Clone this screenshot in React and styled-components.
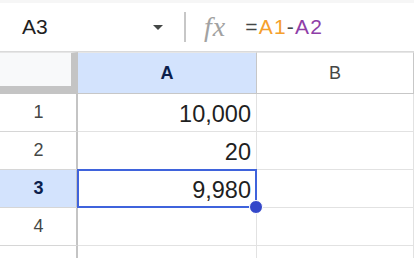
import React from "react";
import styled, { createGlobalStyle } from "styled-components";

const GlobalStyle = createGlobalStyle`
    html, body {
        margin: 0;
        padding: 0;
        background: #fff;
    }

    body {
        font-family: "Liberation Sans", Arial, sans-serif;
        overflow: hidden;
    }
`;

const Page = styled.div`
    width: 414px;
    height: 258px;
    overflow: hidden;
    background: #fff;
`;

const FormulaBar = styled.div`
    height: 52px;
    box-sizing: border-box;
    display: flex;
    align-items: center;

    border-top: 3px solid #f6f6f6;
    border-bottom: 1px solid #dadada;
`;

const NameBox = styled.div`
    width: 165px;
    box-sizing: border-box;
    padding-left: 22px;
    padding-right: 2px;

    display: flex;
    justify-content: space-between;
    align-items: center;

    color: #1f1f1f;
    font-size: 21px;
`;

const Caret = styled.span`
    width: 0;
    height: 0;
    border-left: 5.5px solid transparent;
    border-right: 5.5px solid transparent;
    border-top: 5px solid #444746;
`;

const Divider = styled.span`
    width: 2px;
    height: 30px;
    margin-left: 19px;
    background: #c7c7c7;
`;

const Fx = styled.span`
    margin-left: 18px;
    color: #a2a2a2;
    font-family: "Liberation Serif", "Times New Roman", serif;
    font-style: italic;
    font-size: 28px;
    letter-spacing: 1px;
`;

const Formula = styled.div`
    margin-left: 19px;
    font-size: 21px;
    letter-spacing: 1.2px;
    color: #444746;
`;

const Ref = styled.span`
    color: ${(p) => p.$color};
`;

const Grid = styled.div`
    display: grid;
    grid-template-columns: 78px 179px 1fr;
    grid-auto-rows: 38px;
    grid-template-rows: 42px;
`;

const Corner = styled.div`
    box-sizing: border-box;
    background: #f8f9fa;
    border-right: 7px solid #c4c4c4;
    border-bottom: 8px solid #c4c4c4;
    border-top: 1px solid #e6e6e6;
`;

const ColHeader = styled.div`
    box-sizing: border-box;
    display: flex;
    align-items: center;
    justify-content: center;

    background: ${(p) => (p.$active ? "#d3e3fd" : "#fff")};
    border-top: 1px solid #e6e6e6;
    border-right: 1px solid #c7c7c7;
    border-bottom: 1px solid #c7c7c7;

    color: ${(p) => (p.$active ? "#0b1f4d" : "#444746")};
    font-size: 18px;
    font-weight: ${(p) => (p.$active ? "bold" : "normal")};
`;

const RowHeader = styled.div`
    box-sizing: border-box;
    display: flex;
    align-items: center;
    justify-content: center;

    background: ${(p) => (p.$active ? "#d3e3fd" : "#fff")};
    border-right: 1px solid #c4c4c4;
    border-bottom: 1px solid #d6d6d6;
    box-shadow: inset -1px 0 0 #c4c4c4;

    color: ${(p) => (p.$active ? "#0b1f4d" : "#444746")};
    font-size: 18px;
    font-weight: ${(p) => (p.$active ? "bold" : "normal")};
`;

const Cell = styled.div`
    position: relative;
    box-sizing: border-box;
    display: flex;
    align-items: center;
    justify-content: flex-end;
    padding: 3px 5px 0 0;

    border-right: 1px solid #e2e2e2;
    border-bottom: 1px solid #e2e2e2;

    color: #1f1f1f;
    font-size: 23.5px;
`;

const Selection = styled.div`
    position: absolute;
    z-index: 2;
    left: -1px;
    top: -1px;
    right: -1px;
    bottom: -1px;
    border: 2px solid #3f63dc;
    pointer-events: none;
`;

const Handle = styled.span`
    position: absolute;
    right: -8px;
    bottom: -8px;
    width: 12px;
    height: 12px;
    border-radius: 50%;
    background: #3447c9;
    border: 1px solid #fff;
`;

const rows = [
    { n: 1, a: "10,000" },
    { n: 2, a: "20" },
    { n: 3, a: "9,980", active: true },
    { n: 4, a: "" },
    { n: "", a: "" },
];

function App() {
    return (
        <Page>
            <GlobalStyle />
            <FormulaBar>
                <NameBox>
                    <span>A3</span>
                    <Caret />
                </NameBox>
                <Divider />
                <Fx>fx</Fx>
                <Formula>
                    =<Ref $color="#f5a02c">A1</Ref>-<Ref $color="#8f3ea8">A2</Ref>
                </Formula>
            </FormulaBar>

            <Grid>
                <Corner />
                <ColHeader $active>A</ColHeader>
                <ColHeader>B</ColHeader>

                {rows.map((r, i) => (
                    <React.Fragment key={i}>
                        <RowHeader $active={r.active}>{r.n}</RowHeader>
                        <Cell>
                            {r.a}
                            {r.active && (
                                <Selection>
                                    <Handle />
                                </Selection>
                            )}
                        </Cell>
                        <Cell />
                    </React.Fragment>
                ))}
            </Grid>
        </Page>
    );
}

export default App;
